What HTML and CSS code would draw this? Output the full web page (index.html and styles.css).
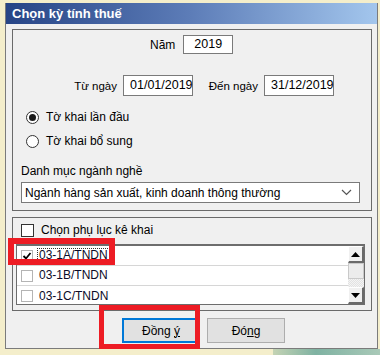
FILE: index.html
```html
<!DOCTYPE html>
<html lang="vi">
<head>
    <meta charset="UTF-8">
    <meta name="viewport" content="width=device-width, initial-scale=1.0">
    <title>Chọn kỳ tính thuế</title>
    <link rel="stylesheet" href="styles.css">
</head>
<body>
    <div class="desktop">
        <div class="window">
            <div class="titleBar">Chọn kỳ tính thuế</div>
            <div class="content">
                <div class="group groupTop">
                    <div class="yearRow">
                        <span class="label">Năm</span>
                        <div class="textBox yearBox">2019</div>
                    </div>
                    <div class="dateRow">
                        <span class="label dateLabel">Từ ngày</span>
                        <div class="textBox dateBox">01/01/2019</div>
                        <span class="label dateLabel toLabel">Đến ngày</span>
                        <div class="textBox dateBox">31/12/2019</div>
                    </div>
                    <div class="radioRow first">
                        <span class="radio checked"></span>
                        <span class="label">Tờ khai lần đầu</span>
                    </div>
                    <div class="radioRow">
                        <span class="radio"></span>
                        <span class="label">Tờ khai bổ sung</span>
                    </div>
                    <div class="comboLabel">Danh mục ngành nghề</div>
                    <div class="combo">
                        <span>Ngành hàng sản xuất, kinh doanh thông thường</span>
                        <svg class="chevron" width="11" height="7" viewBox="0 0 11 7">
                            <polyline points="1,1 5.5,5.5 10,1" fill="none" stroke="#555" stroke-width="1.2"/>
                        </svg>
                    </div>
                </div>
                <div class="group groupBottom">
                    <div class="checkRow">
                        <span class="checkBox"></span>
                        <span class="label">Chọn phụ lục kê khai</span>
                    </div>
                    <div class="listBox">
                        <div class="rows">
                            <div class="row">
                                <span class="checkBox small">
                                    <svg width="10" height="10" viewBox="0 0 10 10">
                                        <polyline points="1.5,5 4,7.5 8.5,2" fill="none" stroke="#000" stroke-width="1.8"/>
                                    </svg>
                                </span>
                                <span class="itemText focused">03-1A/TNDN</span>
                            </div>
                            <div class="row">
                                <span class="checkBox small"></span>
                                <span class="itemText">03-1B/TNDN</span>
                            </div>
                            <div class="row">
                                <span class="checkBox small"></span>
                                <span class="itemText">03-1C/TNDN</span>
                            </div>
                        </div>
                        <div class="scrollBar">
                            <div class="scrollBtn">
                                <svg width="9" height="5" viewBox="0 0 9 5"><polygon points="0,5 9,5 4.5,0" fill="#000"/></svg>
                            </div>
                            <div class="thumb"></div>
                            <div class="track"></div>
                            <div class="scrollBtn">
                                <svg width="9" height="5" viewBox="0 0 9 5"><polygon points="0,0 9,0 4.5,5" fill="#000"/></svg>
                            </div>
                        </div>
                    </div>
                </div>
                <div class="buttons">
                    <button class="btn default">Đồng <u>ý</u></button>
                    <button class="btn">Đó<u>n</u>g</button>
                </div>
            </div>
        </div>
        <div class="highlight hlRow"></div>
        <div class="highlight hlButton"></div>
    </div>
</body>
</html>
```

FILE: styles.css
```css
body{
    margin: 0;
    font-family: "Liberation Sans", Arial, sans-serif;
    font-size: 12px;
    color: #000;
}
.desktop{
    position: relative;
    width: 380px;
    height: 355px;
    overflow: hidden;
    background: linear-gradient(90deg, #c4d3b4, #7fb2a2 40%, #a9c9b8) right bottom / 107px 6px no-repeat, #f4eecb;
    padding-top: 3px;
    box-sizing: border-box;
}
.window{
    margin-left: 5px;
    width: 373px;
    height: 346px;
    box-sizing: border-box;
    border: 1px solid #7b7b7b;
    border-top: none;
    background: #f0f0f0;
    display: flex;
    flex-direction: column;
}
.titleBar{
    height: 21px;
    line-height: 21px;
    padding-left: 6px;
    color: #fff;
    font-weight: bold;
    font-size: 13px;
    background: linear-gradient(90deg, #264486, #5d7db8 50%, #a3c6ed);
}
.content{
    padding: 5px 5px 0 6px;
}
.group{
    box-sizing: border-box;
    border: 1px solid #6a6a6a;
}
.groupTop{
    height: 182px;
}
.groupBottom{
    height: 94px;
    margin-top: 6px;
}
.label{
    line-height: 14px;
    white-space: nowrap;
}
.textBox{
    box-sizing: border-box;
    background: #fff;
    border: 1px solid #7a7a7a;
    padding-left: 6px;
    font-size: 12.5px;
}
.yearRow{
    display: flex;
    align-items: center;
    margin-top: 5px;
    margin-left: 137px;
}
.yearBox{
    margin-left: 8px;
    width: 50px;
    height: 19px;
    line-height: 17px;
    padding-left: 10px;
}
.dateRow{
    display: flex;
    align-items: center;
    margin-top: 21px;
    margin-left: 54px;
}
.dateLabel{
    width: 50px;
    text-align: right;
    font-size: 11.5px;
}
.dateBox{
    margin-left: 6px;
    width: 70px;
    height: 21px;
    line-height: 19px;
}
.toLabel{
    margin-left: 15px;
}
.radioRow{
    display: flex;
    align-items: center;
    gap: 7px;
    margin-left: 13px;
    margin-top: 10px;
}
.radioRow.first{
    margin-top: 14px;
}
.radio{
    width: 13px;
    height: 13px;
    box-sizing: border-box;
    border: 1px solid #333;
    border-radius: 50%;
    background: #fff;
    display: flex;
    align-items: center;
    justify-content: center;
}
.radio.checked::after{
    content: "";
    width: 7px;
    height: 7px;
    border-radius: 50%;
    background: #1b1b1b;
}
.comboLabel{
    margin-top: 16px;
    margin-left: 8px;
    line-height: 14px;
}
.combo{
    margin-top: 4px;
    margin-left: 8px;
    width: 339px;
    height: 21px;
    box-sizing: border-box;
    border: 1px solid #7a7a7a;
    background: #fff;
    display: flex;
    align-items: center;
    justify-content: space-between;
    padding: 0 7px 0 3px;
}
.checkRow{
    display: flex;
    align-items: center;
    gap: 7px;
    margin-top: 5px;
    margin-left: 8px;
}
.checkBox{
    width: 13px;
    height: 13px;
    box-sizing: border-box;
    border: 1px solid #333;
    background: #fff;
    display: flex;
    align-items: center;
    justify-content: center;
}
.checkBox.small{
    border-color: #b4b4b4;
    width: 12px;
    height: 12px;
}
.listBox{
    margin-top: 7px;
    margin-left: 3px;
    width: 349px;
    height: 61px;
    box-sizing: border-box;
    border: 1px solid #6d6d6d;
    border-top-width: 2px;
    background: #fff;
    display: flex;
}
.rows{
    flex: 1;
}
.row{
    height: 20px;
    border-bottom: 1px solid #d6d6d6;
    box-sizing: border-box;
    display: flex;
    align-items: center;
    padding-left: 4px;
    gap: 4px;
}
.row:last-child{
    border-bottom: none;
}
.itemText{
    color: #0b0b28;
    line-height: 13px;
    padding: 0 1px;
    border: 1px dotted transparent;
}
.itemText.focused{
    border-color: #333;
}
.scrollBar{
    width: 16px;
    display: flex;
    flex-direction: column;
}
.scrollBtn{
    height: 17px;
    box-sizing: border-box;
    background: #f0f0f0;
    border-top: 1px solid #fff;
    border-left: 1px solid #fff;
    border-right: 2px solid #6a6a6a;
    border-bottom: 2px solid #6a6a6a;
    display: flex;
    align-items: center;
    justify-content: center;
}
.thumb{
    height: 16px;
    box-sizing: border-box;
    background: #ececec;
    border: 1px solid #c9c9c9;
}
.track{
    flex: 1;
    background: repeating-conic-gradient(#f4f4f4 0 25%, #e2e2e2 0 50%) 0 0 / 2px 2px;
}
.buttons{
    display: flex;
    gap: 7px;
    margin-top: 7px;
    margin-left: 110px;
}
.btn{
    width: 78px;
    height: 25px;
    box-sizing: border-box;
    font-family: "Liberation Sans", Arial, sans-serif;
    font-size: 12px;
    color: #000;
    background: #e1e1e1;
    border: 1px solid #adadad;
    padding: 0;
}
.btn.default{
    border: 2px solid #0078d7;
}
.highlight{
    position: absolute;
    box-sizing: border-box;
    border-style: solid;
    border-color: #ed1c24;
}
.hlRow{
    left: 8px;
    top: 238px;
    width: 107px;
    height: 27px;
    border-width: 6px;
}
.hlButton{
    left: 99px;
    top: 305px;
    width: 101px;
    height: 44px;
    border-width: 5px;
}
```
